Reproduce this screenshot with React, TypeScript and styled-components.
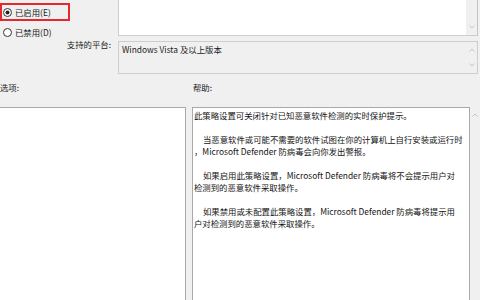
import React from 'react'
import styled, { createGlobalStyle } from 'styled-components'

const GlobalStyle = createGlobalStyle`
  html, body {
    margin: 0;
    padding: 0;
    background: #f0f0f0;
  }
  body {
    font-family: "Noto Sans CJK SC", "Noto Sans", sans-serif;
  }
`

const helpParas: string[][] = [
  ['此策略设置可关闭针对已知恶意软件检测的实时保护提示。'],
  [
    '当恶意软件或可能不需要的软件试图在你的计算机上自行安装或运行时',
    '，Microsoft Defender 防病毒会向你发出警报。',
  ],
  [
    '如果启用此策略设置，Microsoft Defender 防病毒将不会提示用户对',
    '检测到的恶意软件采取操作。',
  ],
  [
    '如果禁用或未配置此策略设置，Microsoft Defender 防病毒将提示用',
    '户对检测到的恶意软件采取操作。',
  ],
]

const Radio: React.FC<{ checked?: boolean }> = ({ checked }) => (
  <svg width="9" height="9" viewBox="0 0 9 9">
    <circle cx="4.5" cy="4.5" r="4" fill="#fff" stroke="#333" strokeWidth="1" />
    {checked && <circle cx="4.5" cy="4.5" r="2" fill="#222" />}
  </svg>
)

const Arrow: React.FC<{ up?: boolean }> = ({ up }) => (
  <svg width="6" height="4" viewBox="0 0 6 4">
    <polyline
      points={up ? '0.5,3.5 3,1 5.5,3.5' : '0.5,0.5 3,3 5.5,0.5'}
      fill="none"
      stroke="#c4c4c4"
      strokeWidth="1"
    />
  </svg>
)

const App: React.FC = () => {
  return (
    <>
      <GlobalStyle />
      <Page>
        <Top>
          <StateColumn>
            <RadioRow $highlight>
              <Radio checked />
              <span>已启用(E)</span>
            </RadioRow>
            <RadioRow>
              <Radio />
              <span>已禁用(D)</span>
            </RadioRow>
            <FieldLabel>支持的平台:</FieldLabel>
          </StateColumn>
          <BoxColumn>
            <CommentBox>
              <BoxText />
              <ScrollTrack $end>
                <Arrow />
              </ScrollTrack>
            </CommentBox>
            <PlatformBox>
              <BoxText>Windows Vista 及以上版本</BoxText>
              <ScrollTrack>
                <Arrow up />
                <Arrow />
              </ScrollTrack>
            </PlatformBox>
          </BoxColumn>
        </Top>
        <LabelRow>
          <span>选项:</span>
          <span>帮助:</span>
        </LabelRow>
        <BottomRow>
          <OptionsBox />
          <HelpBox>
            {helpParas.map((lines, i) => (
              <HelpPara key={i}>
                {lines.map((line, j) => (
                  <HelpLine key={j} $indent={i > 0 && j === 0}>
                    {line}
                  </HelpLine>
                ))}
              </HelpPara>
            ))}
          </HelpBox>
          <HelpScroll>
            <Arrow up />
          </HelpScroll>
        </BottomRow>
      </Page>
    </>
  )
}

const Page = styled.div`
  width: 480px;
  height: 300px;
  overflow: hidden;
  background: #f0f0f0;
  color: #1b1b1b;
  font-size: 8.4px;
  line-height: 12px;
  display: flex;
  flex-direction: column;
`

const Top = styled.div`
  display: flex;
  height: 80px;
  flex: none;
`

const StateColumn = styled.div`
  width: 118px;
  flex: none;
  display: flex;
  flex-direction: column;
`

const RadioRow = styled.div<{ $highlight?: boolean }>`
  display: flex;
  align-items: center;
  gap: 3px;
  box-sizing: border-box;
  width: 70px;
  height: ${(p) => (p.$highlight ? '18px' : '12px')};
  margin-top: ${(p) => (p.$highlight ? '3px' : '5px')};
  padding-left: ${(p) => (p.$highlight ? '1px' : '3px')};
  border: ${(p) => (p.$highlight ? '2px solid #e5282c' : 'none')};
`

const FieldLabel = styled.div`
  text-align: right;
  padding-right: 7px;
  height: 12px;
`

const BoxColumn = styled.div`
  flex: 1;
  display: flex;
  flex-direction: column;
  margin-right: 2px;
`

const CommentBox = styled.div`
  display: flex;
  margin-top: -3px;
  height: 39px;
  box-sizing: border-box;
  border: 1px solid #cdcdcd;
  border-right-color: #c4c4c4;
  background: #fff;
`

const PlatformBox = styled.div`
  display: flex;
  margin-top: 5px;
  height: 33px;
  box-sizing: border-box;
  border: 1px solid #cdcdcd;
  background: #f0f0f0;
`

const BoxText = styled.div`
  flex: 1;
  padding: 1px 3px;
  white-space: nowrap;
`

const ScrollTrack = styled.div<{ $end?: boolean }>`
  width: 11px;
  flex: none;
  background: #f0f0f0;
  display: flex;
  flex-direction: column;
  align-items: center;
  justify-content: ${(p) => (p.$end ? 'flex-end' : 'space-between')};
  padding: 6px 0 6px;
  box-sizing: border-box;
`

const LabelRow = styled.div`
  display: grid;
  grid-template-columns: 193px 1fr;
  margin: 1px 0 0 0;
  height: 12px;
`

const BottomRow = styled.div`
  display: flex;
  margin: 14px 0 0 -2px;
  flex: 1;
  min-height: 0;
`

const OptionsBox = styled.div`
  width: 188px;
  flex: none;
  box-sizing: border-box;
  border: 1px solid #a9a9a9;
  border-bottom: none;
  background: #fff;
  height: 200px;
`

const HelpBox = styled.div`
  margin-left: 6px;
  width: 278px;
  flex: none;
  box-sizing: border-box;
  border: 1px solid #a9a9a9;
  border-bottom: none;
  background: #fff;
  height: 200px;
  padding: 1px 0 0 1px;
  color: #141414;
`

const HelpPara = styled.div`
  margin-bottom: 12px;
`

const HelpLine = styled.div<{ $indent?: boolean }>`
  white-space: nowrap;
  padding-left: ${(p) => (p.$indent ? '9px' : '0')};
`

const HelpScroll = styled.div`
  width: 10px;
  flex: none;
  display: flex;
  justify-content: center;
  padding-top: 6px;
`

export default App
